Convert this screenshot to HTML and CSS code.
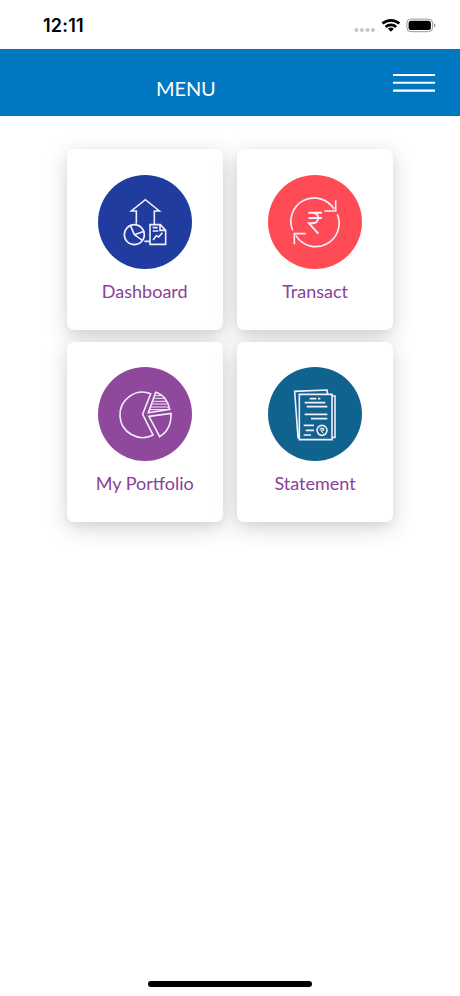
FILE: index.html
```
<!DOCTYPE html>
<html lang="en">
<head>
<meta charset="utf-8">
<title>Menu</title>
<link rel="stylesheet" href="styles.css">
</head>
<body>
<div class="status">
  <span class="time">12:11</span>
  <svg class="indicators" viewBox="0 0 82 16" aria-hidden="true">
    <g fill="#c6c6c8"><circle cx="2.4" cy="12" r="2"/><circle cx="7.9" cy="12" r="2"/><circle cx="13.5" cy="12" r="2"/><circle cx="19" cy="12" r="2"/></g>
    <g fill="none" stroke="#000" stroke-width="2.7"><path d="M28.5 5.6a12.4 12.4 0 0 1 16.8 0"/><path d="M31.6 9a7.8 7.8 0 0 1 10.6 0"/></g>
    <path d="M36.9 13.8l-3-3a4.6 4.6 0 0 1 6 0z"/>
    <rect x="52.9" y="1.1" width="25.7" height="12.6" rx="4" fill="none" stroke="#999" stroke-width="1"/>
    <rect x="54.6" y="2.8" width="22.3" height="9.2" rx="2.6"/>
    <path d="M80 5.3q1.5.5 1.5 2.1t-1.5 2.1z" fill="#999"/>
  </svg>
</div>
<header class="bar">
  <h1 class="title">MENU</h1>
  <svg class="burger" viewBox="0 0 42 20" aria-hidden="true"><path d="M0 2H42M0 9.8H42M0 17.6H42" stroke="#fff" stroke-width="2.1"/></svg>
</header>
<main class="grid">
  <a class="card">
    <svg class="icon dashboard" viewBox="9 14 283.5 283.5">
      <path d="M124 160V122H109L151 88L193 122H178V162M148 213H165"/>
      <circle cx="118" cy="193" r="30"/>
      <path d="M118 193L106 165M118 193L148 183M118 193L142 210"/>
      <path d="M165 163H196L212 180V222H165ZM195 164V180H211M173 172H188M173 182H190M174 209L184 196L191 200L202 187" />
    </svg>
    <span class="label">Dashboard</span>
  </a>
  <a class="card">
    <svg class="icon transact" viewBox="9 14 283.5 283.5">
      <g stroke-width="5"><path d="M83 180A70 70 0 0 1 207 116M217 132A70 70 0 0 1 93 196"/><path d="M212 90V122H178M88 222V190H122"/></g>
      <path stroke-width="6" d="M130 127H171M130 143H171M141 127C166 127 166 159 141 159H132L160 190"/>
    </svg>
    <span class="label">Transact</span>
  </a>
  <a class="card">
    <svg class="icon portfolio" viewBox="9 14 283.5 283.5">
      <path d="M167 94A68 68 0 1 0 174 218L143 156Z"/>
      <path d="M182 90C204 96 220 116 224 141L160 151ZM162 162L228 153C229 184 216 210 194 223Z"/>
      <path stroke-width="3" d="M179 100H200M176 108H208M173 117H214M170 125H218M167 134H221M164 142H212"/>
    </svg>
    <span class="label">My Portfolio</span>
  </a>
  <a class="card">
    <svg class="icon statement" viewBox="9 14 283.5 283.5">
      <path d="M103 96H201V232H103ZM104 230L99 226L89 87L186 83L188 95M202 101H210V225H202"/>
      <path d="M134 109H154M159 109H166M119 121H181M125 133H187M119 156H187M138 169H187M116 189H147M122 204H147M116 218H138"/>
      <circle cx="171" cy="204" r="15"/>
      <path stroke-width="3" d="M164 198H178M164 203H178M169 198C177 199 177 207 169 207L175 213"/>
    </svg>
    <span class="label">Statement</span>
  </a>
</main>
<div class="home"></div>
</body>
</html>
```
FILE: styles.css
```
* { box-sizing: border-box; }
body {
  margin: 0;
  height: 996px;
  display: flex;
  flex-direction: column;
  background: #fff;
  font-family: Lato, sans-serif;
  overflow: hidden;
}
.status {
  height: 49.3px;
  flex: none;
  display: flex;
  justify-content: space-between;
  align-items: flex-start;
  padding: 15px 24px 0 43px;
}
.time {
  font: 600 18px/22px Inter, sans-serif;
  letter-spacing: .2px;
  color: #000;
}
.indicators { width: 82px; height: 16px; margin-top: 3px; }
.bar {
  height: 67.2px;
  flex: none;
  display: flex;
  justify-content: space-between;
  align-items: flex-start;
  padding: 24px 25px 0 156px;
  background: #0078c1;
}
.title {
  margin: 2px 0 0;
  font-size: 20px;
  line-height: 26px;
  font-weight: 400;
  letter-spacing: -.1px;
  color: #fff;
}
.burger { width: 42px; height: 20px; }
.grid {
  display: grid;
  grid-template-columns: 155.5px 155.5px;
  grid-auto-rows: 180.8px;
  gap: 11.4px 14.8px;
  margin: 33px 0 0 67px;
}
.card {
  display: flex;
  flex-direction: column;
  align-items: center;
  padding-top: 25.3px;
  border-radius: 7px;
  background: #fff;
  box-shadow: 0 4px 10px rgba(0, 0, 0, .05), 0 6px 24px rgba(0, 0, 0, .16);
}
.icon {
  width: 94.5px;
  height: 94.5px;
  flex: none;
  border-radius: 50%;
  fill: none;
  stroke: #f3eefb;
  stroke-width: 4.8;
}
.dashboard { background: #203c9f; }
.transact { background: #fe4b55; }
.portfolio { background: #8f499c; }
.statement { background: #10638e; }
.label {
  margin-top: 10px;
  font-size: 18px;
  line-height: 24px;
  color: #8a4198;
}
.home {
  width: 164px;
  height: 5.5px;
  margin: auto auto 9.5px;
  border-radius: 3px;
  background: #000;
}
```
